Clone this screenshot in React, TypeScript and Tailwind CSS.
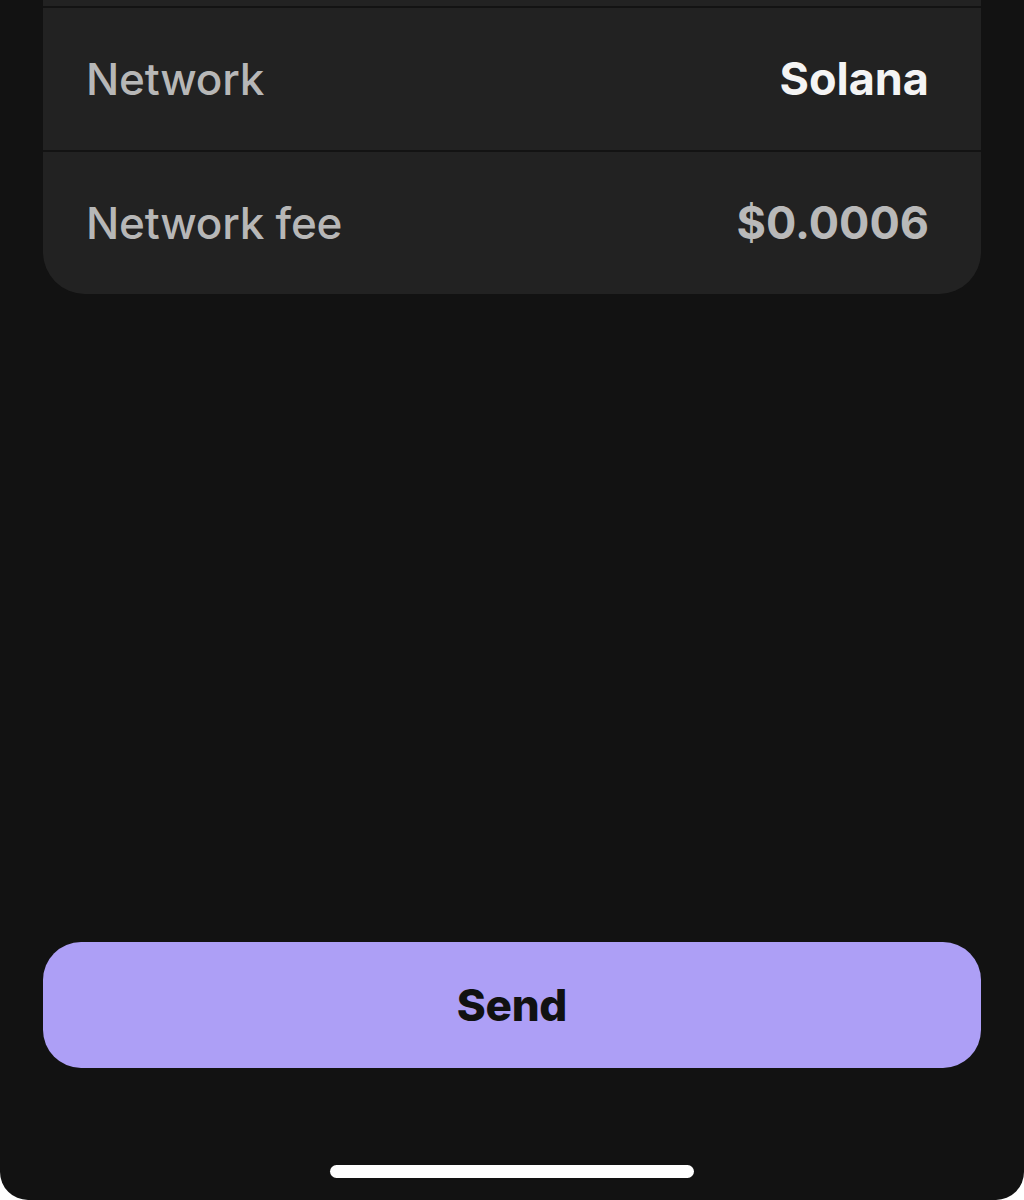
export default function App() {
  const rows = [
    { label: "Network", value: "Solana", valueClass: "text-[#f4f4f4]" },
    { label: "Network fee", value: "$0.0006", valueClass: "text-[#b9b9b9]" },
  ];

  return (
    <div
      className="h-[1200px] w-[1024px] bg-[#121212] flex flex-col overflow-hidden rounded-b-[28px]"
      style={{ fontFamily: "Inter, 'Noto Sans', sans-serif" }}
    >
      {/* Details card (top clipped) */}
      <div className="mx-[43px] bg-[#222222] rounded-b-[42px] flex flex-col">
        <div className="h-[6px]" />
        {rows.map((r) => (
          <div
            key={r.label}
            className="h-[144px] border-t-2 border-[#131313] flex items-center justify-between pl-[43px] pr-[52px]"
          >
            <span className="text-[44px] font-medium text-[#b7b7b7] tracking-[-0.2px]">{r.label}</span>
            <span className={`text-[45px] font-bold ${r.valueClass}`}>{r.value}</span>
          </div>
        ))}
      </div>

      <div className="flex-1" />

      {/* Send button */}
      <button className="mx-[43px] h-[126px] rounded-[38px] bg-[#ad9ff6] flex items-center justify-center">
        <span className="text-[44px] font-extrabold text-[#111111] tracking-[-0.3px]">Send</span>
      </button>

      {/* Home indicator */}
      <div className="h-[132px] flex items-end justify-center pb-[22px]">
        <div className="w-[364px] h-[13px] rounded-full bg-white" />
      </div>
    </div>
  );
}
